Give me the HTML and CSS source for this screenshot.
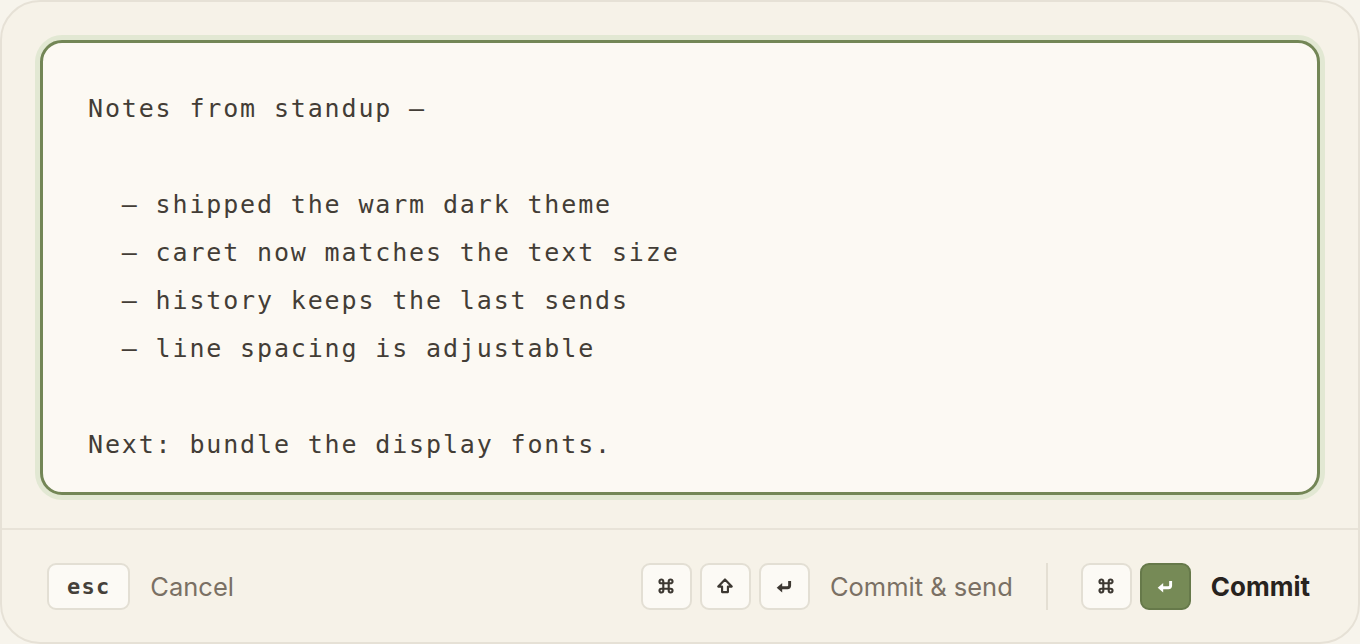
FILE: index.html
```html
<!DOCTYPE html>
<html>
<head>
<meta charset="utf-8">
<link rel="stylesheet" href="styles.css">
</head>
<body>
<div class="panel">
  <div class="top">
    <div class="editor"><pre class="text">Notes from standup —

  – shipped the warm dark theme
  – caret now matches the text size
  – history keeps the last sends
  – line spacing is adjustable

Next: bundle the display fonts.</pre></div>
  </div>
  <div class="footer">
    <div class="group">
      <span class="key key-esc">esc</span>
      <span class="label">Cancel</span>
    </div>
    <div class="spacer"></div>
    <div class="group">
      <span class="key"><svg class="ico" viewBox="0 0 16 16"><path d="M5.6 5.6V3.9a1.7 1.7 0 1 0-1.7 1.7H12.1a1.7 1.7 0 1 0-1.7-1.7V12.1a1.7 1.7 0 1 0 1.7-1.7H3.9a1.7 1.7 0 1 0 1.7 1.7Z" fill="none" stroke="#3d3832" stroke-width="1.9"/></svg></span>
      <span class="key"><svg class="ico" viewBox="0 0 16 16"><path d="M8 2.2L14 8.5H10.6V13.4H5.4V8.5H2Z" fill="none" stroke="#3d3832" stroke-width="1.9" stroke-linejoin="round"/></svg></span>
      <span class="key"><svg class="ico" viewBox="0 0 16 16"><path d="M13 3.5V7.5a2 2 0 0 1-2 2H4.5" fill="none" stroke="#3d3832" stroke-width="2.6"/><path d="M1.5 9.5L6.4 5.3V13.7Z" fill="#3d3832"/></svg></span>
      <span class="label">Commit &amp; send</span>
    </div>
    <div class="divider"></div>
    <div class="group">
      <span class="key"><svg class="ico" viewBox="0 0 16 16"><path d="M5.6 5.6V3.9a1.7 1.7 0 1 0-1.7 1.7H12.1a1.7 1.7 0 1 0-1.7-1.7V12.1a1.7 1.7 0 1 0 1.7-1.7H3.9a1.7 1.7 0 1 0 1.7 1.7Z" fill="none" stroke="#3d3832" stroke-width="1.9"/></svg></span>
      <span class="key key-primary"><svg class="ico" viewBox="0 0 16 16"><path d="M13 3.5V7.5a2 2 0 0 1-2 2H4.5" fill="none" stroke="#ffffff" stroke-width="2.6"/><path d="M1.5 9.5L6.4 5.3V13.7Z" fill="#ffffff"/></svg></span>
      <span class="label label-strong">Commit</span>
    </div>
  </div>
</div>
</body>
</html>
```
FILE: styles.css
```css
html, body {
  margin: 0;
  padding: 0;
  background: #f7f4ec;
}

.panel {
  box-sizing: border-box;
  width: 1360px;
  height: 644px;
  border: 2px solid #e6e1d6;
  border-radius: 40px;
  background: #f6f2e8;
  display: flex;
  flex-direction: column;
  overflow: hidden;
}

.top {
  padding: 38px 38px 33px 38px;
  border-bottom: 2px solid #e8e3d8;
}

.editor {
  box-sizing: border-box;
  height: 455px;
  border: 3px solid #738656;
  border-radius: 22px;
  background: #fcf9f3;
  box-shadow: 0 0 0 5px #e2e8d3;
  padding: 42px 44px 23px 45px;
}

.text {
  margin: 0;
  font-family: "DejaVu Sans Mono", monospace;
  font-size: 25px;
  letter-spacing: 1.85px;
  line-height: 48px;
  color: #433d36;
  white-space: pre;
}

.footer {
  flex: 1;
  display: flex;
  align-items: center;
  padding: 0 48px 0 45px;
}

.group {
  display: flex;
  align-items: center;
  gap: 8px;
}

.spacer {
  flex: 1;
}

.key {
  box-sizing: border-box;
  height: 47px;
  min-width: 51px;
  border: 2px solid #e3dfd4;
  border-radius: 9px;
  background: #fcfaf5;
  display: flex;
  align-items: center;
  justify-content: center;
}

.key-esc {
  padding: 0 18px;
  font-family: "DejaVu Sans Mono", monospace;
  font-weight: bold;
  font-size: 22px;
  letter-spacing: 1.2px;
  color: #45403a;
}

.key-primary {
  background: #768a56;
  border-color: #66794a;
}

.ico {
  width: 18px;
  height: 18px;
}

.label {
  margin-left: 12px;
  font-family: Inter, "Liberation Sans", sans-serif;
  font-size: 25.5px;
  color: #7a7064;
}

.label-strong {
  margin-left: 12px;
  font-weight: 700;
  font-size: 26px;
  color: #28231e;
}

.divider {
  width: 2px;
  height: 47px;
  background: #e4dfd3;
  margin: 0 33px;
}
```
